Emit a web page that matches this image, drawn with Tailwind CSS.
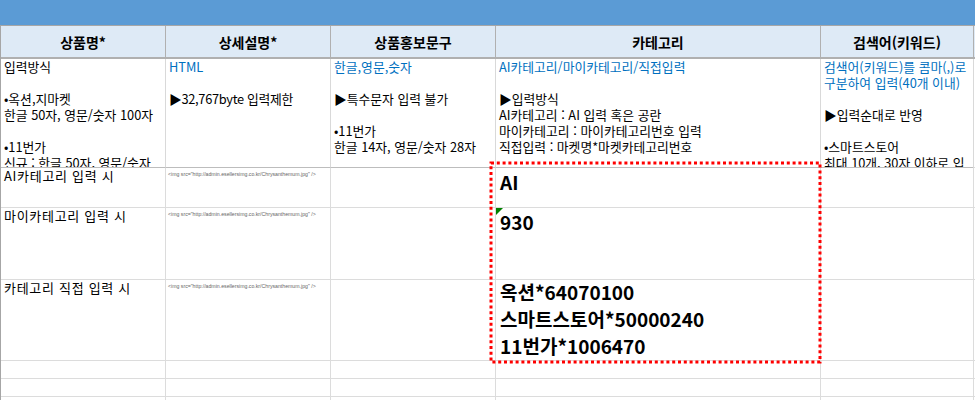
<!DOCTYPE html>
<html lang="ko">
<head>
	<meta charset="UTF-8">
	<title>상품 입력 양식</title>
	<script src="https://cdn.jsdelivr.net/npm/@tailwindcss/browser@4"></script>
</head>
<body class="bg-white h-screen overflow-hidden font-['Noto_Sans_CJK_KR','Noto_Sans',sans-serif] text-[12.8px] leading-[16px] text-black">
	<div class="relative h-[400px] w-[975px] overflow-hidden">
		<!-- Blue band -->
		<div class="h-[25px] bg-[#5b9bd5]"></div>

		<!-- Sheet -->
		<div class="grid grid-cols-[1px_165px_165px_165px_325px_152px_1fr] grid-rows-[33px_109px_40px_72px_81px_18px_18px_18px] border-t border-[#a6a6a6]">
			<!-- Header row -->
			<div class="bg-[#a6a6a6]"></div>
			<div class="flex items-center justify-center border-r border-b-2 border-[#b0b0b0] bg-[#deeaf6] text-[14px] font-bold">상품명*</div>
			<div class="flex items-center justify-center border-r border-b-2 border-[#b0b0b0] bg-[#deeaf6] text-[14px] font-bold">상세설명*</div>
			<div class="flex items-center justify-center border-r border-b-2 border-[#b0b0b0] bg-[#deeaf6] text-[14px] font-bold">상품홍보문구</div>
			<div class="flex items-center justify-center border-r border-b-2 border-[#b0b0b0] bg-[#deeaf6] text-[14px] font-bold">카테고리</div>
			<div class="flex items-center justify-center border-b-2 border-[#b0b0b0] bg-[#deeaf6] text-[14px] font-bold">검색어(키워드)</div>
			<div class="border-l border-b-2 border-[#b0b0b0] bg-[#deeaf6]"></div>

			<!-- Description row -->
			<div class="bg-[#a6a6a6]"></div>
			<div class="overflow-hidden border-r border-b border-[#d9d9d9] border-b-[#bdbdbd] px-[3px] whitespace-nowrap">
				<p>입력방식</p><p class="h-4"></p><p>•옥션,지마켓</p><p>한글 50자, 영문/숫자 100자</p><p class="h-4"></p><p>•11번가</p><p>신규 : 한글 50자, 영문/숫자</p>
			</div>
			<div class="overflow-hidden border-r border-b border-[#d9d9d9] border-b-[#bdbdbd] px-[3px] whitespace-nowrap">
				<p class="text-[#0070c0]">HTML</p><p class="h-4"></p><p class="tracking-[-0.3px]">▶32,767byte 입력제한</p>
			</div>
			<div class="overflow-hidden border-r border-b border-[#d9d9d9] border-b-[#bdbdbd] px-[3px] whitespace-nowrap">
				<p class="text-[#0070c0]">한글,영문,숫자</p><p class="h-4"></p><p>▶특수문자 입력 불가</p><p class="h-4"></p><p>•11번가</p><p>한글 14자, 영문/숫자 28자</p>
			</div>
			<div class="overflow-hidden border-r border-b border-[#d9d9d9] border-b-[#bdbdbd] px-[3px] whitespace-nowrap">
				<p class="text-[#0070c0]">AI카테고리/마이카테고리/직접입력</p><p class="h-4"></p><p>▶입력방식</p><p>AI카테고리 : AI 입력 혹은 공란</p><p>마이카테고리 : 마이카테고리번호 입력</p><p>직접입력 : 마켓명*마켓카테고리번호</p>
			</div>
			<div class="overflow-hidden border-b border-[#bdbdbd] px-[3px] whitespace-nowrap">
				<p class="text-[#0070c0]">검색어(키워드)를 콤마(,)로</p><p class="text-[#0070c0]">구분하여 입력(40개 이내)</p><p class="h-4"></p><p>▶입력순대로 반영</p><p class="h-4"></p><p>•스마트스토어</p><p>최대 10개, 30자 이하로 입</p>
			</div>
			<div class="border-l border-b border-[#d9d9d9]"></div>

			<!-- AI row -->
			<div class="bg-[#a6a6a6]"></div>
			<div class="border-r border-b border-[#dcdcdc] px-[3px] text-[13px] tracking-[0.7px]">AI카테고리 입력 시</div>
			<div class="border-r border-b border-[#dcdcdc] px-[2px] pt-[2px] font-['Liberation_Sans',sans-serif] text-[5.2px] leading-[8px] whitespace-nowrap text-[#666]">&lt;img src="http://admin.esellersimg.co.kr/Chrysanthemum.jpg" /&gt;</div>
			<div class="border-r border-b border-[#dcdcdc]"></div>
			<div class="border-r border-b border-[#dcdcdc] px-[4px] text-[19px] leading-[27px] font-bold">AI</div>
			<div class="border-b border-[#dcdcdc]"></div>
			<div class="border-l border-b border-[#dcdcdc]"></div>

			<!-- My category row -->
			<div class="bg-[#a6a6a6]"></div>
			<div class="border-r border-b border-[#dcdcdc] px-[3px] text-[13px] tracking-[0.7px]">마이카테고리 입력 시</div>
			<div class="border-r border-b border-[#dcdcdc] px-[2px] pt-[2px] font-['Liberation_Sans',sans-serif] text-[5.2px] leading-[8px] whitespace-nowrap text-[#666]">&lt;img src="http://admin.esellersimg.co.kr/Chrysanthemum.jpg" /&gt;</div>
			<div class="border-r border-b border-[#dcdcdc]"></div>
			<div class="relative border-r border-b border-[#dcdcdc] px-[4px] text-[19px] leading-[27px] font-bold">
				<span class="absolute top-0 left-0 border-t-[7px] border-r-[7px] border-t-[#008000] border-r-transparent"></span>
				930
			</div>
			<div class="border-b border-[#dcdcdc]"></div>
			<div class="border-l border-b border-[#dcdcdc]"></div>

			<!-- Direct input row -->
			<div class="bg-[#a6a6a6]"></div>
			<div class="border-r border-b border-[#dcdcdc] px-[3px] text-[13px] tracking-[0.7px]">카테고리 직접 입력 시</div>
			<div class="border-r border-b border-[#dcdcdc] px-[2px] pt-[2px] font-['Liberation_Sans',sans-serif] text-[5.2px] leading-[8px] whitespace-nowrap text-[#666]">&lt;img src="http://admin.esellersimg.co.kr/Chrysanthemum.jpg" /&gt;</div>
			<div class="border-r border-b border-[#dcdcdc]"></div>
			<div class="border-r border-b border-[#dcdcdc] px-[4px] text-[19px] leading-[27px] font-bold">
				<div class="-mt-[2px]">
					<p>옥션*64070100</p><p>스마트스토어*50000240</p><p>11번가*1006470</p>
				</div>
			</div>
			<div class="border-b border-[#dcdcdc]"></div>
			<div class="border-l border-b border-[#dcdcdc]"></div>

			<!-- Empty rows -->
			<div class="bg-[#a6a6a6]"></div><div class="border-r border-b border-[#dcdcdc]"></div><div class="border-r border-b border-[#dcdcdc]"></div><div class="border-r border-b border-[#dcdcdc]"></div><div class="border-r border-b border-[#dcdcdc]"></div><div class="border-b border-[#dcdcdc]"></div><div class="border-l border-b border-[#dcdcdc]"></div>
			<div class="bg-[#a6a6a6]"></div><div class="border-r border-b border-[#dcdcdc]"></div><div class="border-r border-b border-[#dcdcdc]"></div><div class="border-r border-b border-[#dcdcdc]"></div><div class="border-r border-b border-[#dcdcdc]"></div><div class="border-b border-[#dcdcdc]"></div><div class="border-l border-b border-[#dcdcdc]"></div>
			<div class="bg-[#a6a6a6]"></div><div class="border-r border-b border-[#dcdcdc]"></div><div class="border-r border-b border-[#dcdcdc]"></div><div class="border-r border-b border-[#dcdcdc]"></div><div class="border-r border-b border-[#dcdcdc]"></div><div class="border-b border-[#dcdcdc]"></div><div class="border-l border-b border-[#dcdcdc]"></div>
		</div>

		<!-- Red dashed highlight -->
		<svg class="absolute top-[160px] left-[488px]" width="336" height="206" fill="none">
			<rect x="3" y="3" width="329" height="199" stroke="#ff0000" stroke-width="3" stroke-dasharray="3 2.8"/>
		</svg>
	</div>
</body>
</html>
